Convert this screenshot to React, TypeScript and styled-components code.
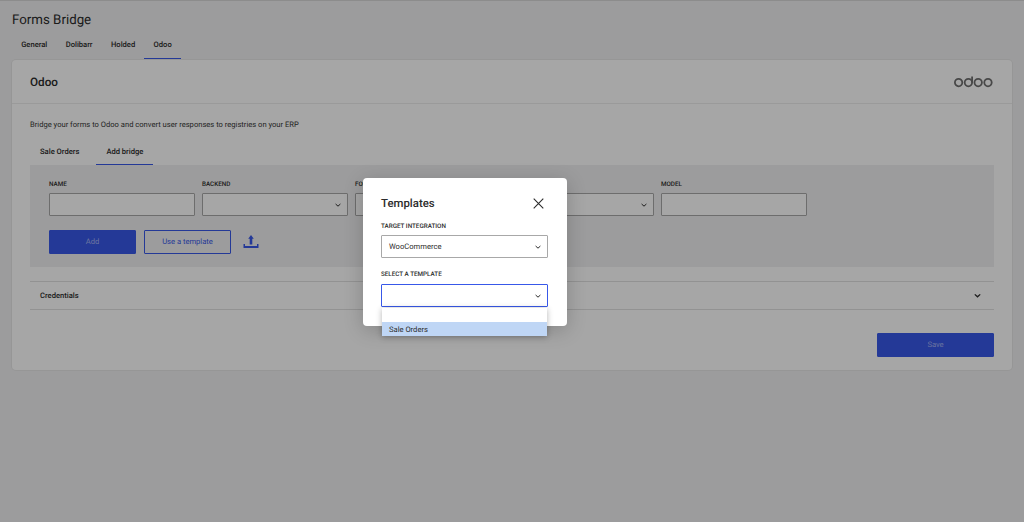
import React from "react";
import styled, { createGlobalStyle } from "styled-components";

const Global = createGlobalStyle`
  html, body { margin: 0; padding: 0; height: 522px; overflow: hidden; background: #f0f0f1; }
  body { font-family: Roboto, "Liberation Sans", sans-serif; color: #2c2c2c; text-rendering: geometricPrecision; }
  * { box-sizing: border-box; }
`;

const Page = styled.div`
  position: relative;
  height: 522px;
  border-top: 1px solid #8c8c8c;
  padding: 0 12px;
`;
const PageTitle = styled.h1`
  margin: 0;
  padding-top: 12px;
  height: 35px;
  font-size: 13.3px;
  line-height: 16px;
  font-weight: 400;
`;
const TabBar = styled.div<{ $gap?: number }>`
  display: flex;
  gap: ${(p) => p.$gap ?? 0}px;
`;
const Tab = styled.div<{ $active?: boolean; $pad: number; $h: number; $bottom: number }>`
  height: ${(p) => p.$h}px;
  padding: 0 ${(p) => p.$pad}px ${(p) => p.$bottom}px;
  display: flex;
  align-items: center;
  font-size: 7.6px;
  font-weight: 500;
  border-bottom: 1.5px solid ${(p) => (p.$active ? "#3858e9" : "transparent")};
`;
const Card = styled.section`
  width: 1000px;
  height: 310px;
  margin-top: 1px;
  background: #fff;
  border-radius: 4px;
  box-shadow: 0 0 0 1px rgba(0, 0, 0, 0.04);
`;
const CardHeader = styled.header`
  height: 44px;
  padding: 0 19px 0 18px;
  border-bottom: 1px solid #ededed;
  display: flex;
  align-items: center;
  justify-content: space-between;
`;
const CardTitle = styled.h2`
  margin: 0;
  font-size: 11.7px;
  font-weight: 500;
`;
const CardBody = styled.div`
  padding: 15px 18px 0;
`;
const Description = styled.p`
  margin: 0 0 10px;
  font-size: 7.6px;
  line-height: 11px;
  color: #383838;
`;
const Panel = styled.div`
  height: 102px;
  background: #f0f0f1;
  padding: 15px 19px 0;
`;
const FieldRow = styled.div`
  display: flex;
  gap: 7px;
`;
const Field = styled.div`
  width: 146px;
`;
const FieldLabel = styled.div<{ $mb?: number }>`
  font-size: 6.3px;
  line-height: 9px;
  font-weight: 500;
  text-transform: uppercase;
  margin-bottom: ${(p) => p.$mb ?? 4}px;
  white-space: nowrap;
`;
const InputBox = styled.div<{ $focus?: boolean }>`
  height: 23px;
  background: #fff;
  border: 1px solid ${(p) => (p.$focus ? "#3858e9" : "#a8a8a8")};
  border-radius: 1px;
  padding: 0 5px 0 7px;
  display: flex;
  align-items: center;
  justify-content: space-between;
  font-size: 7.6px;
`;
const Actions = styled.div`
  display: flex;
  align-items: center;
  gap: 8px;
  margin-top: 14px;
`;
const Button = styled.div<{ $outline?: boolean; $w: number }>`
  width: ${(p) => p.$w}px;
  height: 23.5px;
  border-radius: 1px;
  display: flex;
  align-items: center;
  justify-content: center;
  font-size: 7.6px;
  background: ${(p) => (p.$outline ? "transparent" : "#3858e9")};
  border: 1px solid #3858e9;
  color: ${(p) => (p.$outline ? "#3858e9" : "rgba(255,255,255,0.55)")};
`;
const UploadSlot = styled.div`
  margin-left: 4px;
  display: flex;
`;
const Accordion = styled.div`
  margin-top: 14px;
  height: 28.5px;
  border-top: 1px solid #e0e0e0;
  border-bottom: 1px solid #e0e0e0;
  padding: 0 12px 0 10px;
  display: flex;
  align-items: center;
  justify-content: space-between;
  font-size: 7.6px;
  font-weight: 500;
`;
const Footer = styled.div`
  display: flex;
  justify-content: flex-end;
  margin-top: 23.5px;
`;
const Overlay = styled.div`
  position: absolute;
  inset: 0;
  background: rgba(0, 0, 0, 0.35);
  padding: 177px 0 0 363px;
`;
const Modal = styled.div`
  position: relative;
  width: 204px;
  height: 148px;
  background: #fff;
  border-radius: 4px;
  padding: 17px 19px 0 18px;
  box-shadow: 0 4px 20px rgba(0, 0, 0, 0.2);
`;
const ModalHead = styled.div`
  display: flex;
  align-items: center;
  justify-content: space-between;
  height: 16px;
  margin-bottom: 11px;
  padding-right: 4px;
`;
const ModalTitle = styled.h3`
  margin: 0;
  font-size: 11.4px;
  font-weight: 500;
`;
const ModalField = styled.div`
  margin-bottom: 12px;
`;
const Menu = styled.div`
  position: absolute;
  left: 19px;
  top: 130px;
  width: 165px;
  background: #fff;
  box-shadow: 0 1px 6px rgba(0, 0, 0, 0.3);
`;
const MenuItem = styled.div<{ $selected?: boolean }>`
  height: 14px;
  padding-left: 7px;
  display: flex;
  align-items: center;
  font-size: 7.6px;
  background: ${(p) => (p.$selected ? "#bfd6f5" : "#fff")};
`;

const Chevron = ({ size = 8, weight = 1 }: { size?: number; weight?: number }) => (
  <svg width={size} height={size} viewBox="0 0 8 8" fill="none">
    <path d="M1.6 3 4 5.2 6.4 3" stroke="#2c2c2c" strokeWidth={weight} />
  </svg>
);
const OdooLogo = () => (
  <svg width="39" height="12" viewBox="0 0 39 12" fill="none" stroke="#6f6f6f" strokeWidth="1.8">
    <circle cx="4.6" cy="6.6" r="3.7" />
    <circle cx="14.4" cy="6.6" r="3.7" />
    <path d="M18.1 6.6V.6" />
    <circle cx="24.2" cy="6.6" r="3.7" />
    <circle cx="34" cy="6.6" r="3.7" />
  </svg>
);
const UploadIcon = () => (
  <svg width="16" height="13" viewBox="0 0 16 13" fill="#3858e9">
    <path d="M8 0 10.8 3.8H9.3V9.4H6.7V3.8H5.2Z" />
    <path d="M.5 9h1.5v2h12V9h1.5v4H.5Z" />
  </svg>
);
const CloseIcon = () => (
  <svg width="11" height="11" viewBox="0 0 11 11" fill="none">
    <path d="M.7.7 10.3 10.3M10.3.7.7 10.3" stroke="#2c2c2c" strokeWidth="1.1" />
  </svg>
);

const tabsTop = ["General", "Dolibarr", "Holded", "Odoo"];

export default function App() {
  return (
    <>
      <Global />
      <Page>
        <PageTitle>Forms Bridge</PageTitle>
        <TabBar>
          {tabsTop.map((t) => (
            <Tab key={t} $pad={9.2} $h={23} $bottom={5} $active={t === "Odoo"}>
              {t}
            </Tab>
          ))}
        </TabBar>
        <Card>
          <CardHeader>
            <CardTitle>Odoo</CardTitle>
            <OdooLogo />
          </CardHeader>
          <CardBody>
            <Description>Bridge your forms to Odoo and convert user responses to registries on your ERP</Description>
            <TabBar $gap={7}>
              <Tab $pad={10} $h={25} $bottom={2}>Sale Orders</Tab>
              <Tab $pad={10} $h={25} $bottom={2} $active>Add bridge</Tab>
            </TabBar>
            <Panel>
              <FieldRow>
                <Field>
                  <FieldLabel>Name</FieldLabel>
                  <InputBox />
                </Field>
                <Field>
                  <FieldLabel>Backend</FieldLabel>
                  <InputBox><span /><Chevron /></InputBox>
                </Field>
                <Field>
                  <FieldLabel>Form</FieldLabel>
                  <InputBox><span /><Chevron /></InputBox>
                </Field>
                <Field>
                  <FieldLabel>Credential</FieldLabel>
                  <InputBox><span /><Chevron /></InputBox>
                </Field>
                <Field>
                  <FieldLabel>Model</FieldLabel>
                  <InputBox />
                </Field>
              </FieldRow>
              <Actions>
                <Button $w={87}>Add</Button>
                <Button $w={87} $outline>Use a template</Button>
                <UploadSlot><UploadIcon /></UploadSlot>
              </Actions>
            </Panel>
            <Accordion>
              <span>Credentials</span>
              <Chevron size={9} weight={1.2} />
            </Accordion>
            <Footer>
              <Button $w={117}>Save</Button>
            </Footer>
          </CardBody>
        </Card>
        <Overlay>
          <Modal>
            <ModalHead>
              <ModalTitle>Templates</ModalTitle>
              <CloseIcon />
            </ModalHead>
            <ModalField>
              <FieldLabel>Target integration</FieldLabel>
              <InputBox>WooCommerce<Chevron /></InputBox>
            </ModalField>
            <ModalField>
              <FieldLabel $mb={5}>Select a template</FieldLabel>
              <InputBox $focus><span /><Chevron /></InputBox>
            </ModalField>
            <Menu>
              <MenuItem />
              <MenuItem $selected>Sale Orders</MenuItem>
            </Menu>
          </Modal>
        </Overlay>
      </Page>
    </>
  );
}
